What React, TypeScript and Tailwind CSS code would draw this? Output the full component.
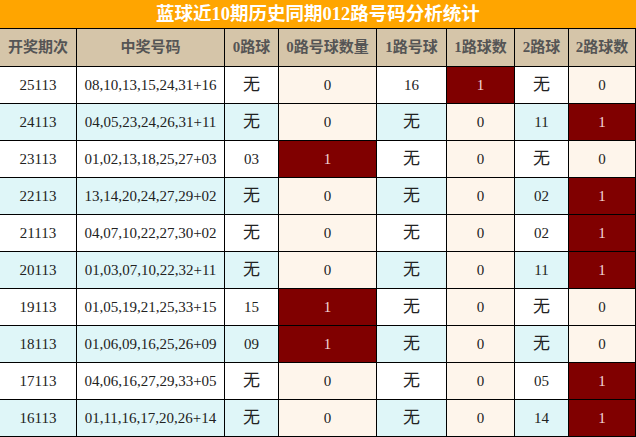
const rows = [
  ['25113', '08,10,13,15,24,31+16', '无', '0', '16', '1', '无', '0'],
  ['24113', '04,05,23,24,26,31+11', '无', '0', '无', '0', '11', '1'],
  ['23113', '01,02,13,18,25,27+03', '03', '1', '无', '0', '无', '0'],
  ['22113', '13,14,20,24,27,29+02', '无', '0', '无', '0', '02', '1'],
  ['21113', '04,07,10,22,27,30+02', '无', '0', '无', '0', '02', '1'],
  ['20113', '01,03,07,10,22,32+11', '无', '0', '无', '0', '11', '1'],
  ['19113', '01,05,19,21,25,33+15', '15', '1', '无', '0', '无', '0'],
  ['18113', '01,06,09,16,25,26+09', '09', '1', '无', '0', '无', '0'],
  ['17113', '04,06,16,27,29,33+05', '无', '0', '无', '0', '05', '1'],
  ['16113', '01,11,16,17,20,26+14', '无', '0', '无', '0', '14', '1'],
];

const headers = ['开奖期次', '中奖号码', '0路球', '0路号球数量', '1路号球', '1路球数', '2路球', '2路球数'];

// count columns stay beige unless they hit
const countCols = [3, 5, 7];

export default function App() {
  return (
    <div
      className="w-[636px] h-[437px] bg-white overflow-hidden"
      style={{ fontFamily: '"Liberation Serif", "Noto Sans CJK SC", serif' }}
    >
      {/* Title */}
      <div className="h-[29px] bg-[#ffa500] border-b border-black flex items-center justify-center text-white font-bold text-[18.5px] leading-none">
        蓝球近10期历史同期012路号码分析统计
      </div>

      <div className="grid grid-cols-[77px_148px_54px_98px_70px_68px_54px_67px]">
        {/* Header */}
        {headers.map((h) => (
          <div
            key={h}
            className="h-[38px] bg-[#d5c5a9] border-b border-r border-black flex items-center justify-center text-[15px] font-bold text-[#555]"
          >
            {h}
          </div>
        ))}

        {/* Rows */}
        {rows.map((r, ri) => {
          const rowBg = ri % 2 === 0 ? 'bg-white' : 'bg-[#dff6f8]';
          return r.map((v, ci) => {
            const isCount = countCols.includes(ci);
            const hit = isCount && v === '1';
            let bg = rowBg;
            let color = 'text-[#222]';
            if (isCount) bg = 'bg-[#fef5eb]';
            if (hit) {
              bg = 'bg-[#800000]';
              color = 'text-[#f2d8d8]';
            }
            const size = v === '无' ? 'text-[17px]' : 'text-[15px]';
            return (
              <div
                key={ri + '-' + ci}
                className={`h-[37px] border-b border-r border-black flex items-center justify-center ${bg} ${color} ${size}`}
              >
                {v}
              </div>
            );
          });
        })}
      </div>
    </div>
  );
}
